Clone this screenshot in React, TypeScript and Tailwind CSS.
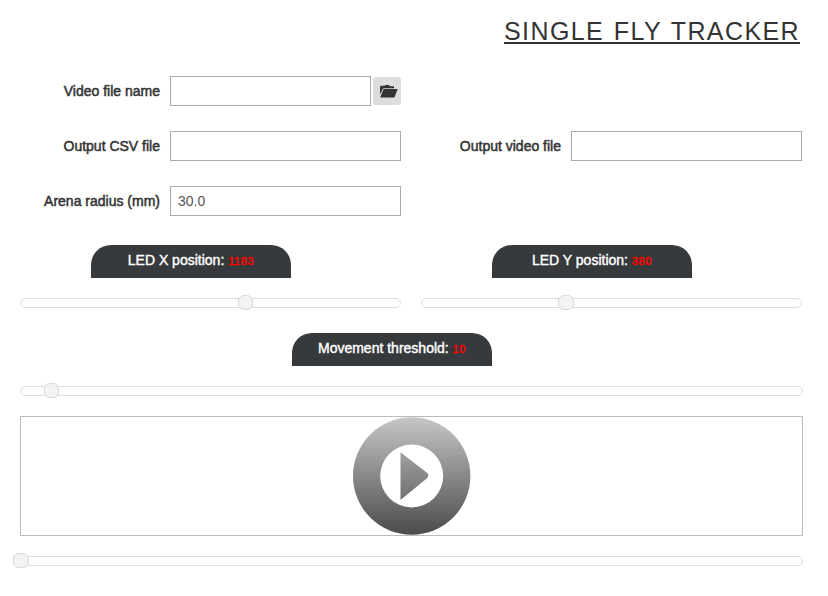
import React from 'react';

const labelClass =
  'w-[140px] shrink-0 text-right text-[14px] leading-[30px] text-[#333] [-webkit-text-stroke:0.5px_#333]';
const inputClass =
  'h-[30px] min-w-0 flex-1 border border-[#aaa] bg-white px-[7px] text-[14px] text-[#555] outline-none';

function Field({ label, value = '', children }: { label: string; value?: string; children?: React.ReactNode }) {
  return (
    <div className="flex w-[381px] items-center">
      <label className={labelClass}>{label}</label>
      <div className="ml-[10px] flex min-w-0 flex-1 items-center gap-[2px]">
        <input className={inputClass} defaultValue={value} aria-label={label} />
        {children}
      </div>
    </div>
  );
}

function Tab({ label, value }: { label: string; value: string }) {
  return (
    <div className="h-[33px] w-[200px] rounded-t-[20px] bg-[#373a3c] text-center text-[14px] leading-[30px] text-white [-webkit-text-stroke:0.4px_#fff]">
      {label}:{' '}
      <span className="text-[11px] tracking-[0.6px] text-[#f00] [-webkit-text-stroke:0.5px_#f00]">{value}</span>
    </div>
  );
}

function Slider({ offset, wide = false }: { offset: number; wide?: boolean }) {
  return (
    <div className="relative h-[10px] rounded-[5px] border border-[#ddd] bg-white">
      <div
        className={`absolute -top-[4px] h-[15px] rounded-[6px] border border-[#d9d9d9] bg-[#f3f3f3] ${wide ? 'w-[16px]' : 'w-[15px]'}`}
        style={{ left: offset }}
      />
    </div>
  );
}

export default function App() {
  return (
    <div className="h-[596px] w-[828px] overflow-hidden bg-white pl-[20px] font-['Liberation_Sans',Arial,sans-serif]">
      <h1 className="h-[76px] w-[780px] pt-[14px] text-right text-[25px] leading-[34px] tracking-[1.4px] [word-spacing:1.3px] text-[#333] underline decoration-2 underline-offset-[2px]">
        SINGLE FLY TRACKER
      </h1>
      <div className="flex flex-col gap-[25px]">
        <Field label="Video file name">
          <button className="flex h-[28px] w-[28px] shrink-0 items-center justify-center rounded-[3px] bg-[#ddd]" aria-label="Browse">
            <svg width="18" height="13" viewBox="0 0 18 13" className="ml-[3px]" fill="#333">
              <path d="M0 9.5V1.8L1 0.8H4.5L5.5 0H9L10 1.3H14V3.3H3.8L2.6 4.3Z" />
              <path d="M3.6 4.1H17.7L14.4 12.6H0.2Z" />
            </svg>
          </button>
        </Field>
        <div className="flex gap-[20px]">
          <Field label="Output CSV file" />
          <Field label="Output video file" />
        </div>
        <Field label="Arena radius (mm)" value="30.0" />
      </div>
      <div className="mt-[29px] flex gap-[20px]">
        <div className="flex w-[381px] flex-col gap-[20px]">
          <div className="pl-[71px]">
            <Tab label="LED X position" value="1183" />
          </div>
          <Slider offset={217} />
        </div>
        <div className="flex w-[381px] flex-col gap-[20px]">
          <div className="pl-[71px]">
            <Tab label="LED Y position" value="380" />
          </div>
          <Slider offset={136} wide />
        </div>
      </div>
      <div className="mt-[25px] flex w-[783px] flex-col gap-[20px]">
        <div className="pl-[272px]">
          <Tab label="Movement threshold" value="10" />
        </div>
        <Slider offset={23} />
        <div className="flex h-[120px] items-center justify-center border border-[#bbb]">
          <svg width="118" height="118" viewBox="0 0 118 118">
            <defs>
              <linearGradient id="ring" x1="0" y1="0" x2="0" y2="1">
                <stop offset="0" stopColor="#c6c6c6" />
                <stop offset="1" stopColor="#4b4b4b" />
              </linearGradient>
              <linearGradient id="arrow" x1="0" y1="0" x2="0" y2="1">
                <stop offset="0" stopColor="#a0a0a0" />
                <stop offset="1" stopColor="#6f6f6f" />
              </linearGradient>
            </defs>
            <circle cx="58.7" cy="59" r="58.7" fill="url(#ring)" />
            <circle cx="58.7" cy="59" r="31.5" fill="#fff" />
            <path d="M47.5 35.3L74.3 56Q76.3 58.7 74.3 61L47.5 83Z" fill="url(#arrow)" />
          </svg>
        </div>
        <Slider offset={-8} wide />
      </div>
    </div>
  );
}
